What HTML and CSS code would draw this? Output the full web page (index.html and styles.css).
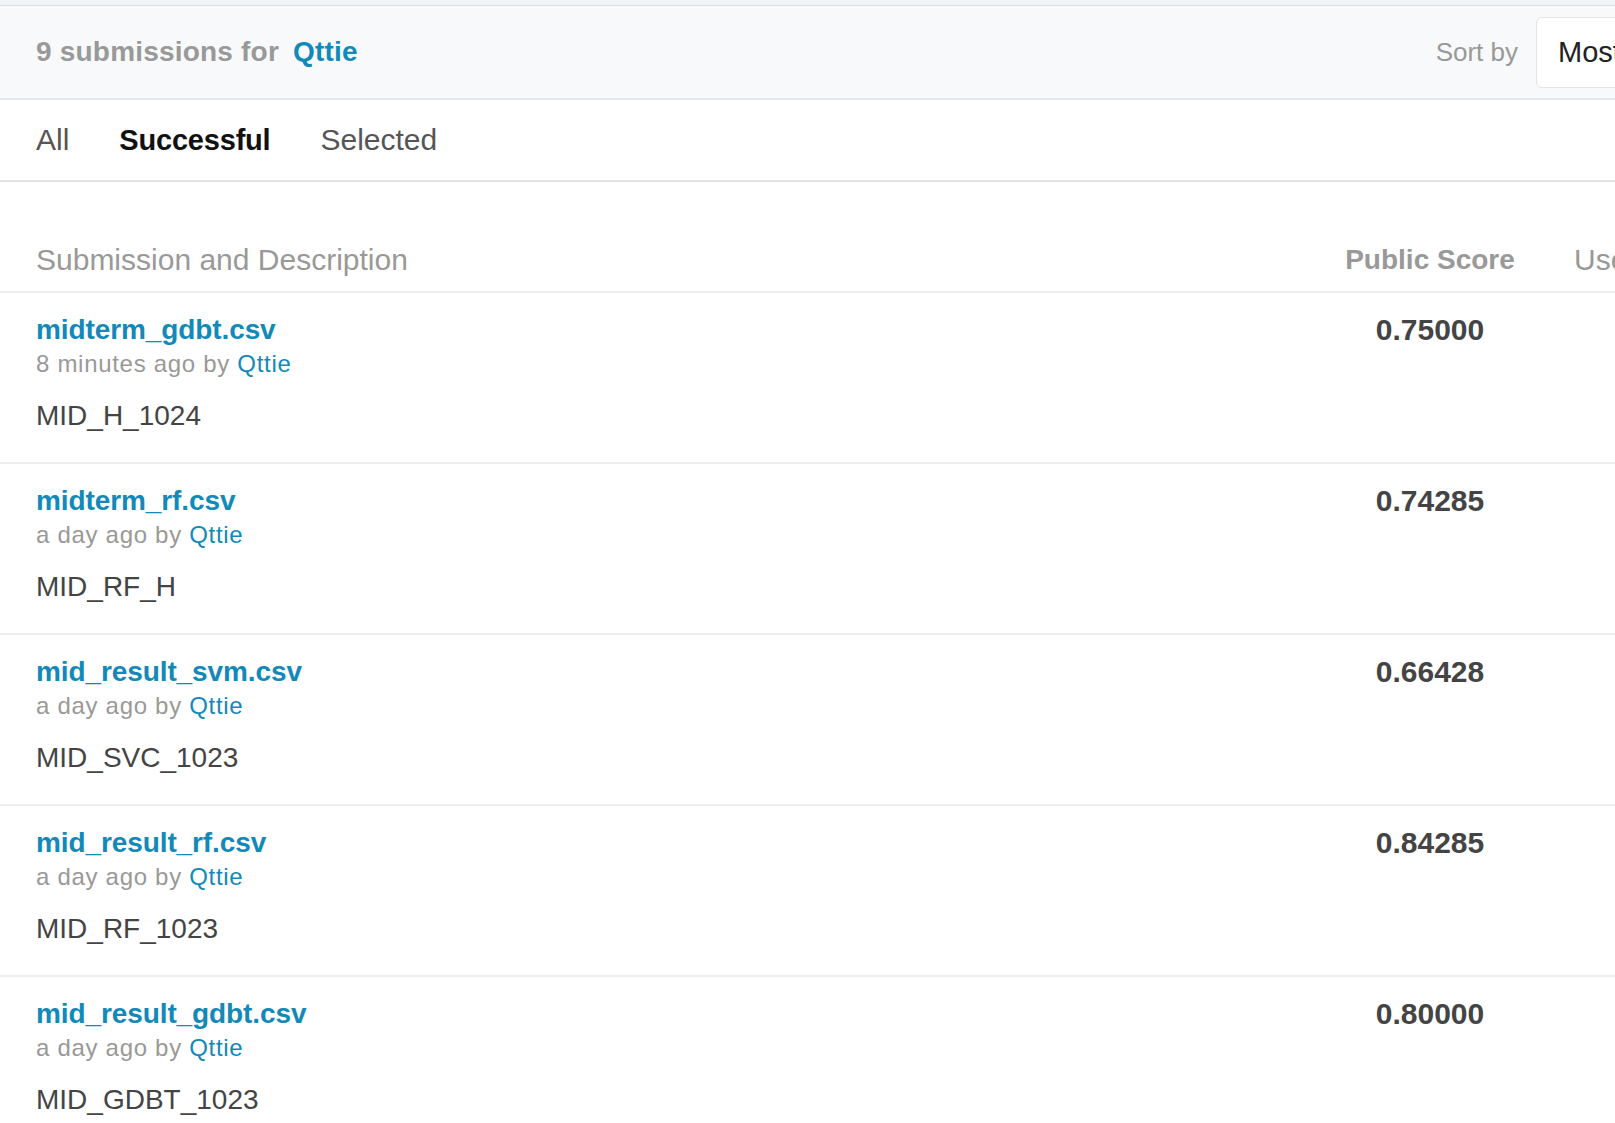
FILE: index.html
```html
<!DOCTYPE html>
<html lang="en">
<head>
<meta charset="utf-8">
<title>Submissions</title>
<link rel="stylesheet" href="styles.css">
</head>
<body>
<div class="page">
  <div class="topstrip"></div>
  <header class="subhead">
    <h1 class="subhead-title">9 submissions for <a class="user-link" href="#">Qttie</a></h1>
    <div class="sort">
      <span class="sort-label">Sort by</span>
      <div class="sort-box">Most recent</div>
    </div>
  </header>
  <nav class="tabs">
    <a class="tab" href="#">All</a>
    <a class="tab tab-active" href="#">Successful</a>
    <a class="tab" href="#">Selected</a>
  </nav>
  <div class="table">
    <div class="thead">
      <div class="th th-desc">Submission and Description</div>
      <div class="th th-score">Public Score</div>
      <div class="th th-used">Use for Final Score</div>
    </div>

    <div class="row">
      <div class="cell-desc">
        <a class="file" href="#">midterm_gdbt.csv</a>
        <div class="meta">8 minutes ago by <a class="user-link" href="#">Qttie</a></div>
        <div class="desc">MID_H_1024</div>
      </div>
      <div class="cell-score">0.75000</div>
      <div class="cell-used"></div>
    </div>

    <div class="row">
      <div class="cell-desc">
        <a class="file" href="#">midterm_rf.csv</a>
        <div class="meta">a day ago by <a class="user-link" href="#">Qttie</a></div>
        <div class="desc">MID_RF_H</div>
      </div>
      <div class="cell-score">0.74285</div>
      <div class="cell-used"></div>
    </div>

    <div class="row">
      <div class="cell-desc">
        <a class="file" href="#">mid_result_svm.csv</a>
        <div class="meta">a day ago by <a class="user-link" href="#">Qttie</a></div>
        <div class="desc">MID_SVC_1023</div>
      </div>
      <div class="cell-score">0.66428</div>
      <div class="cell-used"></div>
    </div>

    <div class="row">
      <div class="cell-desc">
        <a class="file" href="#">mid_result_rf.csv</a>
        <div class="meta">a day ago by <a class="user-link" href="#">Qttie</a></div>
        <div class="desc">MID_RF_1023</div>
      </div>
      <div class="cell-score">0.84285</div>
      <div class="cell-used"></div>
    </div>

    <div class="row">
      <div class="cell-desc">
        <a class="file" href="#">mid_result_gdbt.csv</a>
        <div class="meta">a day ago by <a class="user-link" href="#">Qttie</a></div>
        <div class="desc">MID_GDBT_1023</div>
      </div>
      <div class="cell-score">0.80000</div>
      <div class="cell-used"></div>
    </div>
  </div>
</div>
</body>
</html>
```

FILE: styles.css
```css
html, body {
  margin: 0;
  padding: 0;
  background: #ffffff;
  overflow: hidden;
}

body {
  font-family: "Liberation Sans", Arial, sans-serif;
  color: #444444;
}

a {
  text-decoration: none;
}

.page {
  width: 1800px;
}

.topstrip {
  height: 5px;
  background: #f1f4f7;
  border-bottom: 1px solid #dcdfe2;
}

.subhead {
  display: flex;
  align-items: center;
  height: 92px;
  padding-left: 36px;
  padding-right: 34px;
  background: #f8f9fa;
  border-bottom: 2px solid #e6e7e8;
}

.subhead-title {
  margin: 0;
  font-size: 28px;
  font-weight: 700;
  color: #999999;
  letter-spacing: 0.2px;
  white-space: nowrap;
}

.subhead-title .user-link {
  margin-left: 6px;
}

.user-link {
  color: #1289b8;
}

.sort {
  margin-left: auto;
  display: flex;
  align-items: center;
  gap: 18px;
  white-space: nowrap;
}

.sort-label {
  font-size: 26px;
  color: #999999;
}

.sort-box {
  box-sizing: border-box;
  width: 230px;
  height: 71px;
  display: flex;
  align-items: center;
  padding-left: 21px;
  background: #ffffff;
  border: 1px solid #e3e4e5;
  border-radius: 6px;
  font-size: 29px;
  color: #222222;
}

.tabs {
  display: flex;
  align-items: center;
  gap: 50px;
  height: 80px;
  padding-left: 36px;
  border-bottom: 2px solid #e1e2e3;
}

.tab {
  font-size: 30px;
  color: #555555;
}

.tab-active {
  font-size: 29px;
  font-weight: 700;
  letter-spacing: -0.2px;
  color: #111111;
}

.table {
  width: 100%;
}

.thead {
  display: grid;
  grid-template-columns: 1294px 200px 270px;
  align-items: end;
  padding-left: 36px;
  height: 111px;
  border-bottom: 2px solid #eeeeee;
  box-sizing: border-box;
  padding-bottom: 14px;
}

.th {
  color: #999999;
  font-size: 30px;
  line-height: 34px;
  white-space: nowrap;
}

.th-score {
  font-size: 28px;
  font-weight: 700;
  text-align: center;
}

.th-used {
  padding-left: 44px;
}

.row {
  display: grid;
  grid-template-columns: 1294px 200px 270px;
  padding-left: 36px;
  padding-top: 20px;
  height: 171px;
  box-sizing: border-box;
  border-bottom: 2px solid #eeeeee;
}

.cell-desc {
  display: flex;
  flex-direction: column;
  align-items: flex-start;
}

.file {
  font-size: 28px;
  font-weight: 700;
  line-height: 34px;
  letter-spacing: -0.1px;
  color: #1289b8;
}

.meta {
  font-size: 24px;
  line-height: 34px;
  letter-spacing: 0.7px;
  color: #999999;
}

.desc {
  margin-top: 15px;
  font-size: 28px;
  line-height: 40px;
  color: #444444;
}

.cell-score {
  font-size: 30px;
  font-weight: 700;
  line-height: 34px;
  text-align: center;
  color: #444444;
}
```
